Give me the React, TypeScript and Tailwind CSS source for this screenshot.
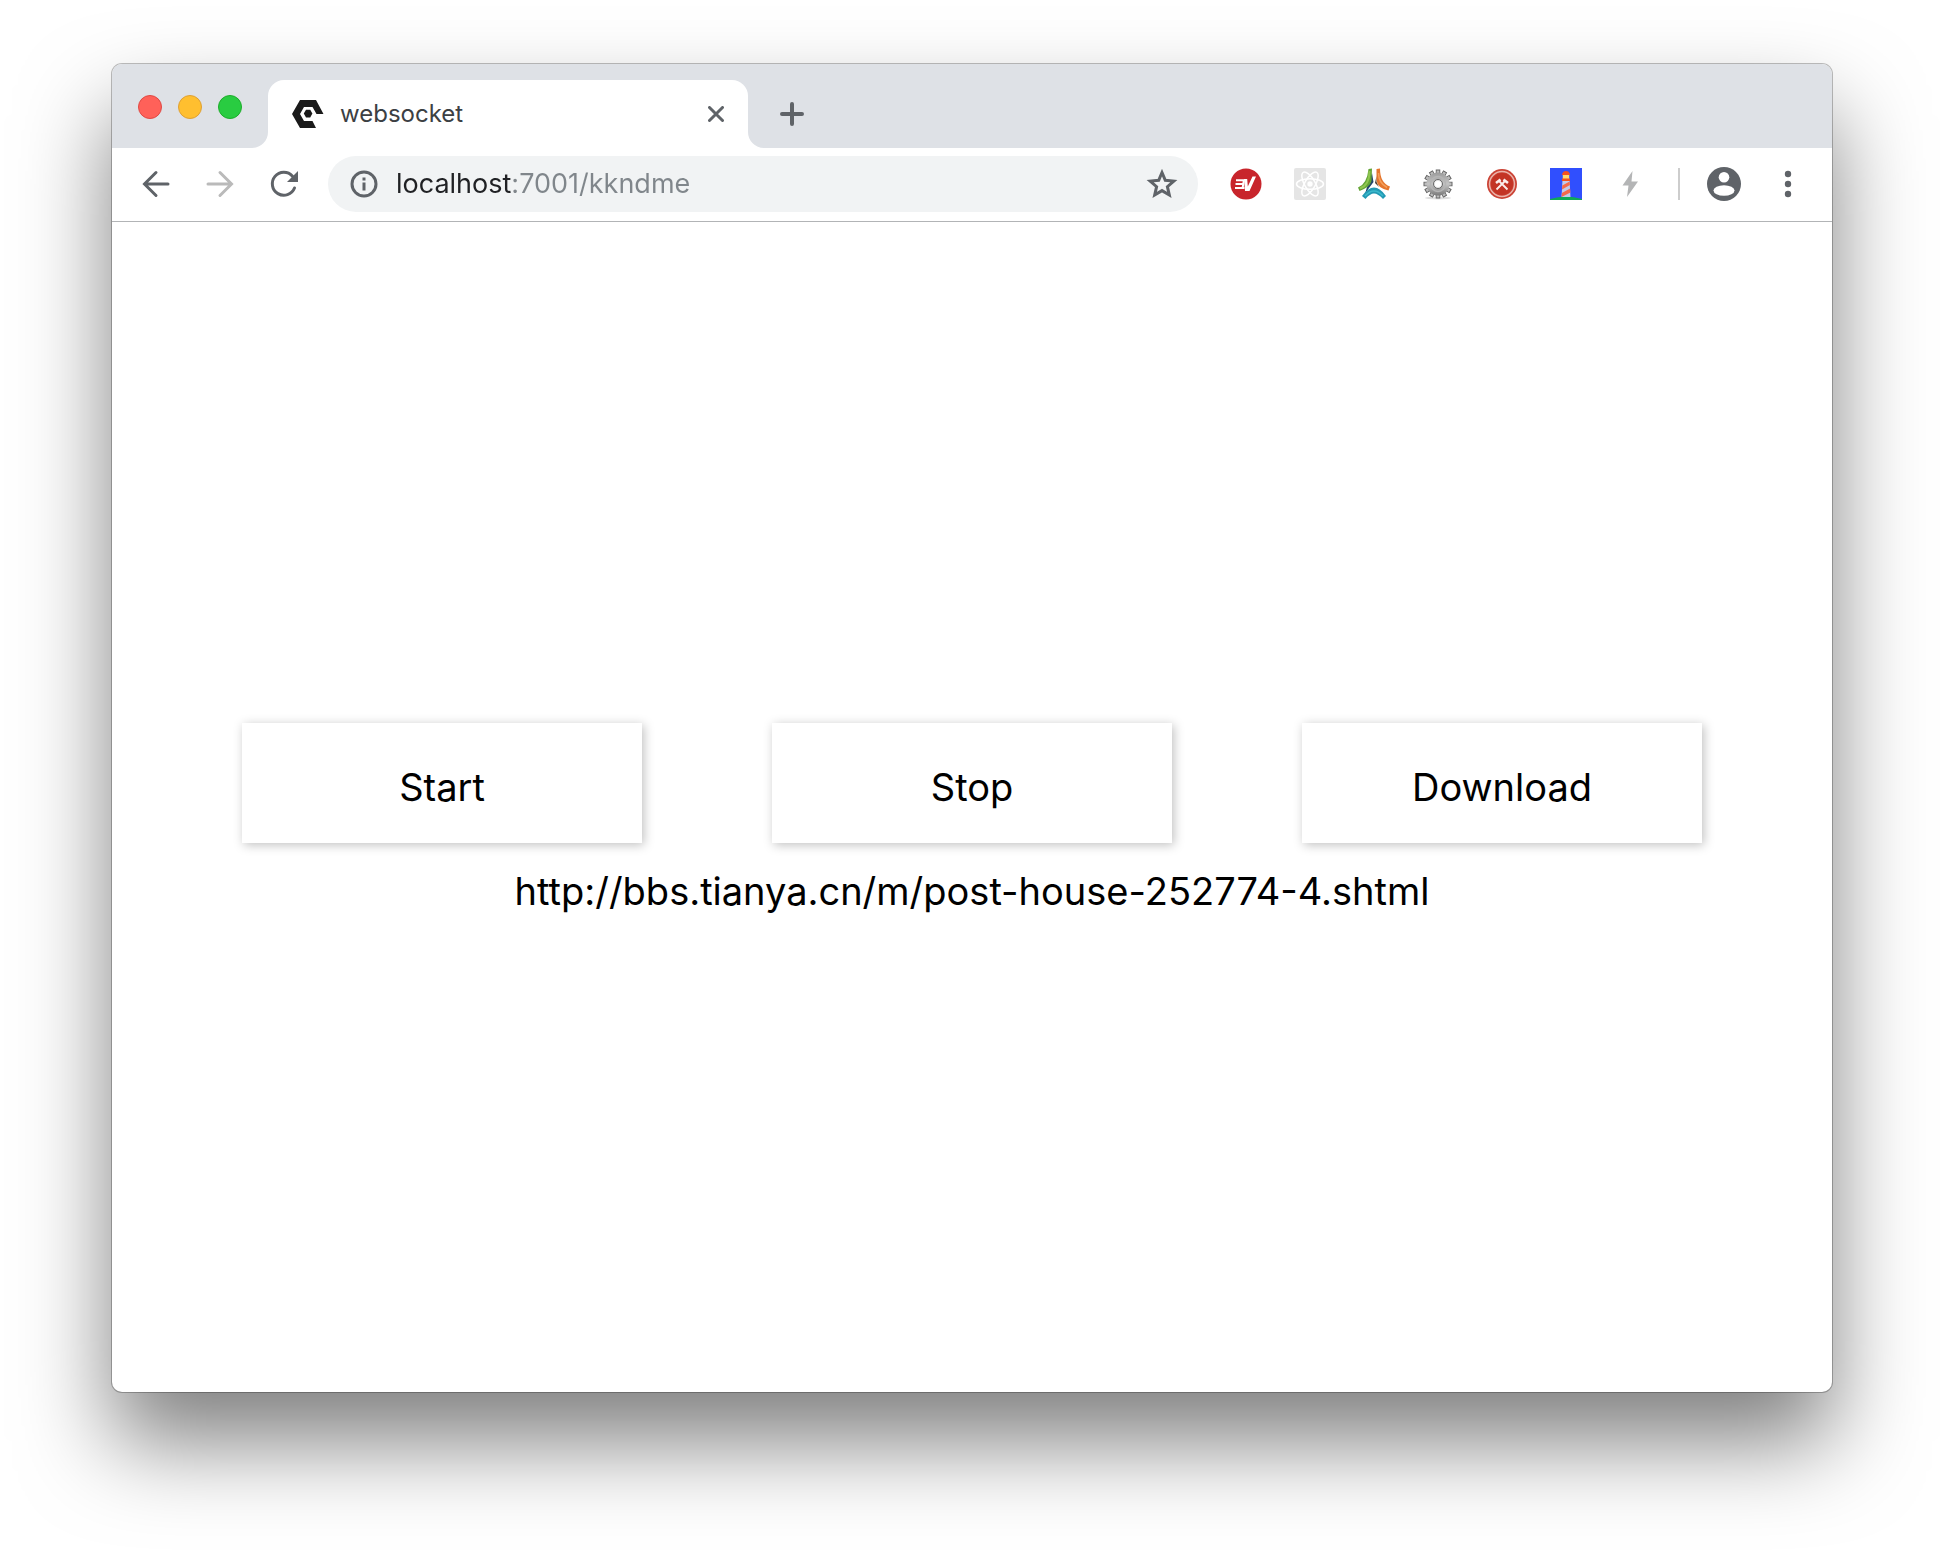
import React from "react";

function Favicon() {
  return (
    <svg viewBox="0 0 32 28" className="h-7 w-8 shrink-0" aria-hidden="true">
      <path
        fill="#1a1a1a"
        fillRule="evenodd"
        d="M8 0H24L31.500 14H24.500L20.500 7H12L8 14L12 21H20.500L24 28H8L0 14Z"
      />
      <path fill="#1a1a1a" d="M14 9.800H18.200L20.400 13.600L18.200 17.600H14L11.800 13.600Z" />
    </svg>
  );
}

function TabCurve({ className }: { className: string }) {
  return (
    <svg viewBox="0 0 16 16" className={className} aria-hidden="true">
      <path fill="#fff" d="M16 0V16H0A16 16 0 0 0 16 0Z" />
    </svg>
  );
}

function TabStrip() {
  return (
    <header className="flex h-[84px] items-end bg-[#dee1e6]">
      <div className="flex h-full w-[156px] shrink-0 items-start gap-4 pt-[31px] pl-[26px]">
        <button aria-label="Close window" className="size-6 rounded-full border border-[#df4944] bg-[#ff6159]" />
        <button aria-label="Minimize window" className="size-6 rounded-full border border-[#dea034] bg-[#ffbf2f]" />
        <button aria-label="Zoom window" className="size-6 rounded-full border border-[#1dad2b] bg-[#29cc41]" />
      </div>
      <div className="relative flex h-[68px] w-[480px] items-center rounded-t-2xl bg-white pr-6 pl-6">
        <TabCurve className="absolute bottom-0 -left-4 size-4" />
        <TabCurve className="absolute -right-4 bottom-0 size-4 -scale-x-100" />
        <Favicon />
        <span className="ml-4 flex-1 text-[24px] leading-8 text-[#3c4043]">websocket</span>
        <button aria-label="Close tab">
          <svg viewBox="0 0 16 16" className="size-4" fill="none" stroke="#5f6368" strokeWidth="3" strokeLinecap="round">
            <path d="M1.500 1.500L14.500 14.500M14.500 1.500L1.500 14.500" />
          </svg>
        </button>
      </div>
      <button aria-label="New tab" className="mb-[22px] ml-8">
        <svg viewBox="0 0 24 24" className="size-6" fill="none" stroke="#5f6368" strokeWidth="4" strokeLinecap="round">
          <path d="M12 2V22M2 12H22" />
        </svg>
      </button>
    </header>
  );
}

function Arrow({ className }: { className: string }) {
  return (
    <svg viewBox="0 0 32 32" className={className} fill="none" stroke="currentColor" strokeWidth="3" strokeLinecap="round">
      <path d="M28 16H5M16 4.500L4.500 16L16 27.500" />
    </svg>
  );
}

function Extension({ label, children }: { label: string; children: React.ReactNode }) {
  return (
    <button aria-label={label}>
      <svg viewBox="0 0 32 32" className="size-8">
        {children}
      </svg>
    </button>
  );
}

function Extensions() {
  return (
    <div className="flex shrink-0 items-center gap-8">
      <Extension label="VPN">
        <circle cx="16" cy="16" r="15.500" fill="#c8252c" />
        <path
          fill="none"
          stroke="#fff"
          strokeWidth="2"
          d="M6 12.200H14.500M5.500 16H14M5 20H14.500M14 11.500L12.500 20.500"
        />
        <path fill="#fff" d="M14 11H17.200L17.800 18.500L22.500 8.500H26L19.500 23H15Z" />
      </Extension>
      <Extension label="React tools">
        <rect width="32" height="32" rx="2" fill="#e5e5e5" />
        <g fill="none" stroke="#fff" strokeWidth="1.500">
          <ellipse cx="16" cy="16" rx="13.500" ry="5.300" />
          <ellipse cx="16" cy="16" rx="13.500" ry="5.300" transform="rotate(60 16 16)" />
          <ellipse cx="16" cy="16" rx="13.500" ry="5.300" transform="rotate(120 16 16)" />
        </g>
        <circle cx="16" cy="16" r="2.700" fill="#fff" />
      </Extension>
      <Extension label="Tri-color">
        <path d="M14 5L15.500 14L11 20L7 26L9 19Z" fill="#24466b" />
        <path d="M18.500 8V14L21 19L17 15Z" fill="#4a3a2c" />
        <path d="M10.500 1L14 .500L13.500 13Q12 19 1.500 23L0 19.500Q9 16 10.500 1Z" fill="#63a436" />
        <path d="M11.500 3Q11.500 17 2 20.500" fill="none" stroke="#8fc64f" strokeWidth="2" />
        <path d="M18.500 1L22 .500Q22 15 32 18.500L30.500 22.500Q19 20 18.500 12Z" fill="#e5762d" />
        <path d="M20.500 5Q20.500 15 29 19.500" fill="none" stroke="#f5a05b" strokeWidth="1.500" />
        <path d="M4 28Q10 19.500 16 19.500Q22 19.500 28 28L25 31Q20 25.500 16 25.500Q12 25.500 7.500 31Z" fill="#2399b4" />
        <path d="M7 28Q16 18 25 28" fill="none" stroke="#3cb9cc" strokeWidth="1.500" />
      </Extension>
      <Extension label="Settings gear">
        <defs>
          <linearGradient id="gear" x1="0" y1="0" x2="0" y2="1">
            <stop offset="0" stopColor="#9b9b9b" />
            <stop offset=".5" stopColor="#c4c4c4" />
            <stop offset="1" stopColor="#7a7a7a" />
          </linearGradient>
        </defs>
        <ellipse cx="16" cy="30" rx="13" ry="1.500" fill="#dedede" />
        <g stroke="#666" strokeWidth="4.500">
          <path d="M16 1.500V30.500M1.500 16H30.500M8.750 3.400L23.250 28.600M3.400 8.750L28.600 23.250M3.400 23.250L28.600 8.750M8.750 28.600L23.250 3.400" />
        </g>
        <g stroke="#bdbdbd" strokeWidth="2.800">
          <path d="M16 2.500V29.500M2.500 16H29.500M9.250 4.300L22.750 27.700M4.300 9.250L27.700 22.750M4.300 22.750L27.700 9.250M9.250 27.700L22.750 4.300" />
        </g>
        <circle cx="16" cy="16" r="11.500" fill="url(#gear)" />
        <circle cx="16" cy="16" r="7.500" fill="none" stroke="#b5b5b5" strokeWidth="1.500" />
        <circle cx="16" cy="16" r="4.500" fill="#e9e9e9" stroke="#666" strokeWidth="1" />
        <circle cx="16" cy="16" r="3" fill="#fff" />
      </Extension>
      <Extension label="Hammers">
        <circle cx="16" cy="16" r="15" fill="#cb4335" />
        <circle cx="16" cy="16" r="12.500" fill="none" stroke="#eab3aa" strokeWidth="1.500" />
        <circle cx="16" cy="16" r="11" fill="#c33425" />
        <g fill="none" stroke="#fbeeec" strokeWidth="1.800">
          <path d="M12.500 12.500L21.500 21.500M19.500 12.500L10.500 21.500" />
          <path d="M10 15L14.500 11.500M22 15L17.500 11.500" strokeWidth="2.600" />
        </g>
      </Extension>
      <Extension label="Lighthouse">
        <rect width="32" height="32" fill="#304ffe" />
        <path d="M0 32V31Q8 28.500 16 28.500T32 31V32Z" fill="#0fa958" />
        <path d="M12.500 12H19.500L20.500 29H11.500Z" fill="#c3cbe9" />
        <path d="M12.300 17.500L19.600 13.500L19.900 17L12 21.500ZM11.900 25L20.100 20.500L20.400 24.500L11.500 29Z" fill="#f5694b" />
        <path d="M12.800 7H19.200V11H12.800Z" fill="#ffd96a" />
        <path d="M12 7Q12.500 3 16 3T20 7ZM12 10.500H20V13H12Z" fill="#f4511e" />
      </Extension>
      <Extension label="Quick action">
        <path d="M18.500 3L8.500 17.500H14.500L13 29L24 13.500H17.500Z" fill="#b4b5b6" />
      </Extension>
    </div>
  );
}

function Toolbar() {
  return (
    <nav className="flex h-[74px] items-center border-b border-[#b2b4b6] bg-white pr-7 pb-px pl-7">
      <div className="flex shrink-0 items-center gap-8 text-[#5f6368]">
        <button aria-label="Back">
          <Arrow className="size-8" />
        </button>
        <button aria-label="Forward" className="text-[#bababa]">
          <Arrow className="size-8 rotate-180" />
        </button>
        <button aria-label="Reload">
          <svg viewBox="0 0 32 32" className="size-8" fill="none" stroke="currentColor" strokeWidth="3">
            <path d="M26.500 20A11.500 11.500 0 1 1 24.500 8.200" strokeLinecap="round" />
            <path d="M30 3V14H19Z" fill="currentColor" stroke="none" />
          </svg>
        </button>
      </div>
      <div className="ml-7 flex h-14 min-w-0 flex-1 items-center rounded-full bg-[#f1f3f4] pr-5 pl-[22px]">
        <button aria-label="Site information">
          <svg viewBox="0 0 28 28" className="size-7" fill="none" stroke="#5f6368" strokeWidth="3">
            <circle cx="14" cy="14" r="12" />
            <path d="M14 12.500V20.500M14 7.500V10.500" />
          </svg>
        </button>
        <input
          aria-label="Address"
          defaultValue="localhost:7001/kkndme"
          spellCheck={false}
          className="ml-[18px] min-w-0 flex-1 bg-linear-to-r from-[#202124] from-[117px] to-[#80868b] to-[117px] bg-clip-text text-[27px] leading-10 text-transparent outline-none"
        />
        <button aria-label="Bookmark this page">
          <svg viewBox="0 0 32 32" className="size-8" fill="none" stroke="#5f6368" strokeWidth="3">
            <path d="M16 4.500L19.300 12.300L27.800 13.100L21.400 18.700L23.300 27L16 22.600L8.700 27L10.600 18.700L4.200 13.100L12.700 12.300Z" />
          </svg>
        </button>
      </div>
      <div className="ml-8 flex shrink-0 items-center">
        <Extensions />
        <div className="ml-8 h-8 w-0.5 bg-[#cdcdcd]" />
        <button aria-label="Profile" className="ml-6">
          <svg viewBox="0 0 40 40" className="size-10">
            <circle cx="20" cy="20" r="17" fill="#5f6368" />
            <circle cx="20" cy="13.300" r="5.300" fill="#fff" />
            <ellipse cx="20" cy="26.500" rx="10.500" ry="5.300" fill="#fff" />
          </svg>
        </button>
        <button aria-label="Menu" className="ml-7">
          <svg viewBox="0 0 32 32" className="size-8" fill="#5f6368">
            <circle cx="16" cy="6" r="3.200" />
            <circle cx="16" cy="16" r="3.200" />
            <circle cx="16" cy="26" r="3.200" />
          </svg>
        </button>
      </div>
    </nav>
  );
}

export default function App() {
  return (
    <div className="flex min-h-screen flex-col bg-white px-28 pt-16 pb-40 font-['Inter','Noto_Sans',sans-serif]">
      <div className="flex flex-1 flex-col overflow-hidden rounded-[10px] bg-white shadow-[0_0_0_1px_rgba(0,0,0,0.25),0_50px_90px_rgba(0,0,0,0.5)]">
        <TabStrip />
        <Toolbar />
        <main className="flex flex-1 flex-col justify-center pt-6 text-[38px] leading-[48px] text-black">
          <div className="flex justify-evenly">
            {["Start", "Stop", "Download"].map((label) => (
              <button key={label} className="h-[120px] w-[400px] bg-white pt-2 shadow-[2px_2px_10px_rgba(0,0,0,0.25)]">
                {label}
              </button>
            ))}
          </div>
          <p className="mt-6 text-center">http://bbs.tianya.cn/m/post-house-252774-4.shtml</p>
        </main>
      </div>
    </div>
  );
}
